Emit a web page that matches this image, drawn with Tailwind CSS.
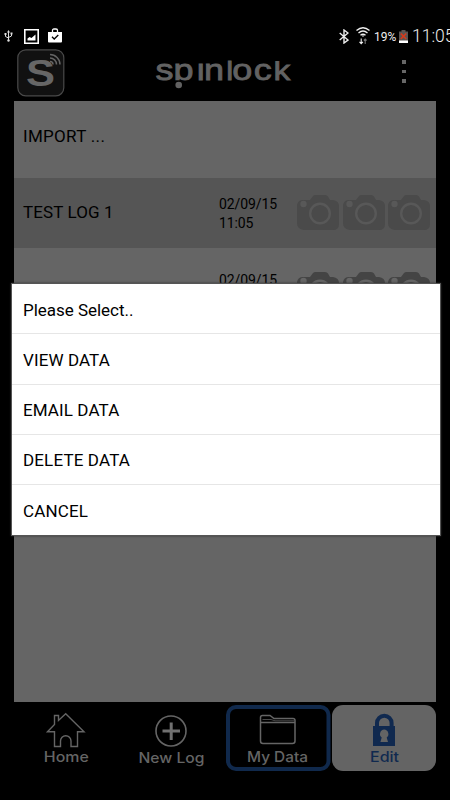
<!DOCTYPE html>
<html lang="en">
<head>
<meta charset="utf-8">
<title>Spinlock</title>
<script src="https://cdn.jsdelivr.net/npm/@tailwindcss/browser@4"></script>
</head>
<body class="bg-black">
<svg class="hidden">
  <symbol id="cam" viewBox="0 0 42 36">
    <path fill="currentColor" d="M13 5 L16 1 Q17 0 18.500 0 H28 Q30 0 31 1.500 L33 5 H36 Q42 6 42 11 V29 Q42 35 36 35 H7 Q0 34 0 28 V10 Q1 5 6 5 Z"/>
    <circle cx="6.500" cy="9" r="3.200" fill="var(--ring)"/>
    <circle cx="23" cy="18.500" r="9.800" fill="none" stroke="var(--ring)" stroke-width="2.400"/>
  </symbol>
</svg>
<div class="relative flex h-[800px] w-[450px] flex-col overflow-hidden bg-black font-['Roboto',sans-serif]">
  <div class="flex h-[48px] shrink-0 items-start pt-[27px] text-[#eee]">
    <svg class="ml-[4px] mt-[3px] h-[12px] w-[9px] shrink-0" viewBox="0 0 9 12" fill="none" stroke="#ddd" stroke-width="1"><path d="M4.500 1.500V10M1.500 4V6.500L4.500 8M7.500 3.500V6L4.500 7.500"/><path fill="#ddd" stroke="none" d="M4.500 0L6 2.500H3ZM.5 3H2.500V5H.5ZM6.500 2.500H8.500V4.500H6.500Z"/><circle cx="4.500" cy="10.500" r="1.200" fill="#ddd" stroke="none"/></svg>
    <svg class="ml-[11px] mt-[2px] h-[15px] w-[15px] shrink-0" viewBox="0 0 15 15"><path fill="none" stroke="#fff" stroke-width="1.600" d="M.8.8H14.200V14.200H.8Z"/><path fill="#fff" d="M3.500 11.500V9.500L5.500 8L7.500 9L11.500 5.500V11.500Z"/></svg>
    <svg class="ml-[9px] mt-[1px] h-[15px] w-[14px] shrink-0" viewBox="0 0 14 15"><path fill="#fff" d="M0 4H14V13.500Q14 14.500 13 14.500H1Q0 14.500 0 13.500Z"/><path fill="none" stroke="#fff" stroke-width="1.300" d="M4.500 4V2.500Q4.500 1 6 1H8Q9.500 1 9.500 2.500V4"/><path fill="none" stroke="#000" stroke-width="1.300" d="M4 8.800L6.200 11L10.300 7"/></svg>
    <svg class="ml-[277px] mt-[2px] h-[15px] w-[10px] shrink-0" viewBox="0 0 10 15" fill="none" stroke="#eee" stroke-width="1.400"><path d="M.7 4L9 11L5 14V1L9 4L.7 11"/></svg>
    <svg class="ml-[7px] h-[19px] w-[14px] shrink-0" viewBox="0 0 14 19" fill="none" stroke="#eee" stroke-width="1.400"><path d="M.5 3.500Q7-2 13.500 3.500M2.500 6Q7 2 11.500 6M4.500 8.300Q7 6.300 9.500 8.300"/><path fill="#eee" stroke="none" d="M5.700 8.500H8.300L7 10Z"/><path stroke-width="1.100" d="M5.200 11.500V16.500M3.500 14.800L5.200 16.600L6.900 14.800"/><path stroke="#777" stroke-width="1.100" d="M9.200 17V12M7.800 13.500L9.200 12L10.600 13.500"/></svg>
    <span class="ml-[4px] mt-[2px] w-[25px] shrink-0 whitespace-nowrap text-[12px] leading-[16px]">19%</span>
    <svg class="mt-[3px] h-[13px] w-[9px] shrink-0" viewBox="0 0 9 13"><path fill="#5a5452" d="M2.500 0H6.500V1.500H9V13H0V1.500H2.500Z"/><path stroke="#d63a1c" stroke-width="1.700" d="M1.800 3.500L7.200 9M7.200 3.500L1.800 9"/><path fill="#fff" d="M0 10.500H9V13H0Z"/></svg>
    <span class="ml-[4px] w-[60px] shrink-0 whitespace-nowrap text-[17.500px] leading-[18px] font-light">11:05</span>
  </div>
  <div class="flex h-[53px] shrink-0 items-start pl-[17px] text-[#626262]">
    <svg class="mt-px h-[48px] w-[48px] shrink-0" viewBox="0 0 48 48"><rect x=".8" y=".8" width="46" height="46" rx="8" fill="#111" stroke="#4a4a4a" stroke-width="1.200"/><text x="9" y="37" font-family="Liberation Sans, sans-serif" font-weight="700" font-size="37" textLength="29" lengthAdjust="spacingAndGlyphs" fill="#666">S</text><g fill="none" stroke="#646464" stroke-width="1.500"><path d="M33 5.500A10 10 0 0 1 43 15.500M33 9A6.500 6.500 0 0 1 39.500 15.500M33 12.500A3 3 0 0 1 36 15.500"/></g></svg>
    <svg class="ml-[90px] mt-[8px] h-[36px] w-[140px] shrink-0 overflow-visible" viewBox="155 56 140 36"><text transform="translate(155 79.500) scale(1.200 1)" y="0" font-family="Liberation Sans, sans-serif" font-size="30" fill="#626262" stroke="#626262" stroke-width=".8"><tspan x="0.500 15.500 34 40.800">spın</tspan><tspan x="59.300" font-size="26">l</tspan><tspan x="64.300 82.200">oc</tspan><tspan x="98.800" font-size="28" textLength="15.500">k</tspan></text><path fill="#000" d="M174 80.300H181V90H174Z"/><path fill="#000" d="M270 56H295V61H270Z"/><circle cx="178.700" cy="85" r="3.300" fill="#626262"/></svg>
    <div class="ml-[107px] mt-[12px] flex flex-col gap-[6px]"><i class="h-[3.500px] w-[4px] bg-[#666]"></i><i class="h-[3.500px] w-[4px] bg-[#666]"></i><i class="h-[3.500px] w-[4px] bg-[#666]"></i></div>
  </div>
  <div class="ml-[14px] h-[601px] w-[422px] shrink-0 overflow-hidden bg-[#656565] text-[17px] text-black">
    <div class="flex h-[77px] items-center pl-[9px] pb-[6px]"><span class="tracking-[0.300px]">IMPORT ...</span></div>
    <div class="flex h-[70px] items-center bg-[#555] pl-[9px]">
      <span class="w-[196px] tracking-[0.100px]">TEST LOG 1</span>
      <span class="w-[78px] pt-px text-[14px] leading-[19px] tracking-[-0.100px]">02/09/15<br>11:05</span>
      <div class="flex gap-[3.500px] text-[#4a4a4a] [--ring:#585858]">
        <svg class="h-[36px] w-[42px]"><use href="#cam"/></svg><svg class="h-[36px] w-[42px]"><use href="#cam"/></svg><svg class="h-[36px] w-[42px]"><use href="#cam"/></svg>
      </div>
    </div>
    <div class="flex h-[83px] items-center pl-[9px]">
      <span class="w-[196px]">TEST LOG</span>
      <span class="w-[78px] text-[14px] leading-[19px] tracking-[-0.100px]">02/09/15<br>11:05</span>
      <div class="flex gap-[3.500px] text-[#444] [--ring:#666]">
        <svg class="h-[36px] w-[42px]"><use href="#cam"/></svg><svg class="h-[36px] w-[42px]"><use href="#cam"/></svg><svg class="h-[36px] w-[42px]"><use href="#cam"/></svg>
      </div>
    </div>
  </div>
  <nav class="ml-[14px] mt-[3px] flex h-[66px] w-[422px] shrink-0 text-[#656565]">
    <div class="w-[105px]"><svg class="h-[66px] w-[105px]" viewBox="14 705 105 66"><path fill="none" stroke="#656565" stroke-width="1.400" d="M47.500 731.700L54.500 724.500V715.500H58.500V720.500L65.700 713.800L84 731.700H77.500V746.500H71V741A5.200 5.200 0 0 0 60.500 741V746.500H54.500V731.700Z"/><text x="43.800" y="761.500" font-family="Inter, sans-serif" font-weight="500" font-size="14.500" textLength="45" lengthAdjust="spacingAndGlyphs" fill="#656565">Home</text></svg></div>
    <div class="w-[106px]"><svg class="h-[66px] w-[106px]" viewBox="119 705 106 66"><circle cx="171" cy="731" r="15" fill="none" stroke="#656565" stroke-width="1.600"/><path stroke="#707070" stroke-width="3" d="M162.500 731H180M171.200 722.500V740"/><text x="138.500" y="762.500" font-family="Inter, sans-serif" font-weight="500" font-size="14.500" textLength="66" lengthAdjust="spacingAndGlyphs" fill="#656565">New Log</text></svg></div>
    <div class="w-[107px]"><svg class="h-[66px] w-[107px]" viewBox="225 705 107 66"><rect x="228" y="707" width="100.500" height="62" rx="8" fill="#000" stroke="#10294c" stroke-width="4"/><path fill="none" stroke="#656565" stroke-width="1.500" d="M260.500 741V717.500Q260.500 715.500 262.500 715.500H270L274 718.500H293Q295 718.500 295 720.500V741Q295 743.500 292.500 743.500H263Q260.500 743.500 260.500 741ZM260.500 722.500H295"/><path fill="none" stroke="#4a4a4a" d="M262.500 719.500H271L275 720.800H294"/><text x="247" y="762" font-family="Inter, sans-serif" font-weight="500" font-size="14.500" textLength="61" lengthAdjust="spacingAndGlyphs" fill="#656565">My Data</text></svg></div>
    <div class="w-[104px] rounded-[11px] bg-[#646464]"><svg class="h-[66px] w-[104px]" viewBox="332 705 104 66"><path fill="none" stroke="#10294f" stroke-width="4" d="M377 727V723A7.300 7.300 0 0 1 391.600 723V727"/><path fill="#10294f" d="M373 726H395V746H373Z"/><path fill="#646464" d="M384.200 729.500A4.500 4.500 0 0 1 386.700 737.500L388 742H380.400L381.700 737.500A4.500 4.500 0 0 1 384.200 729.500Z"/><text x="370" y="762" font-family="Inter, sans-serif" font-weight="500" font-size="14.500" textLength="29" lengthAdjust="spacingAndGlyphs" fill="#10294f">Edit</text></svg></div>
  </nav>
  <div class="absolute left-[11px] top-[283px] w-[430px] divide-y divide-[#e6e6e6] border border-[#555] bg-white text-[17px] text-black shadow-[0_0_2px_0px_#333]">
    <div class="flex h-[50px] items-center pl-[11px] pt-[4px]"><span class="tracking-[-0.030px]">Please Select..</span></div>
    <div class="flex h-[51px] items-center pl-[11px] pt-[4px]"><span class="tracking-[0.100px]">VIEW DATA</span></div>
    <div class="flex h-[50px] items-center pl-[11px] pt-[3px]"><span class="tracking-[0.100px]">EMAIL DATA</span></div>
    <div class="flex h-[50px] items-center pl-[11px] pt-[3px]"><span class="tracking-[0.150px]">DELETE DATA</span></div>
    <div class="flex h-[50px] items-center pl-[11px] pt-[3px]"><span class="tracking-[0.150px]">CANCEL</span></div>
  </div>
</div>
</body>
</html>
